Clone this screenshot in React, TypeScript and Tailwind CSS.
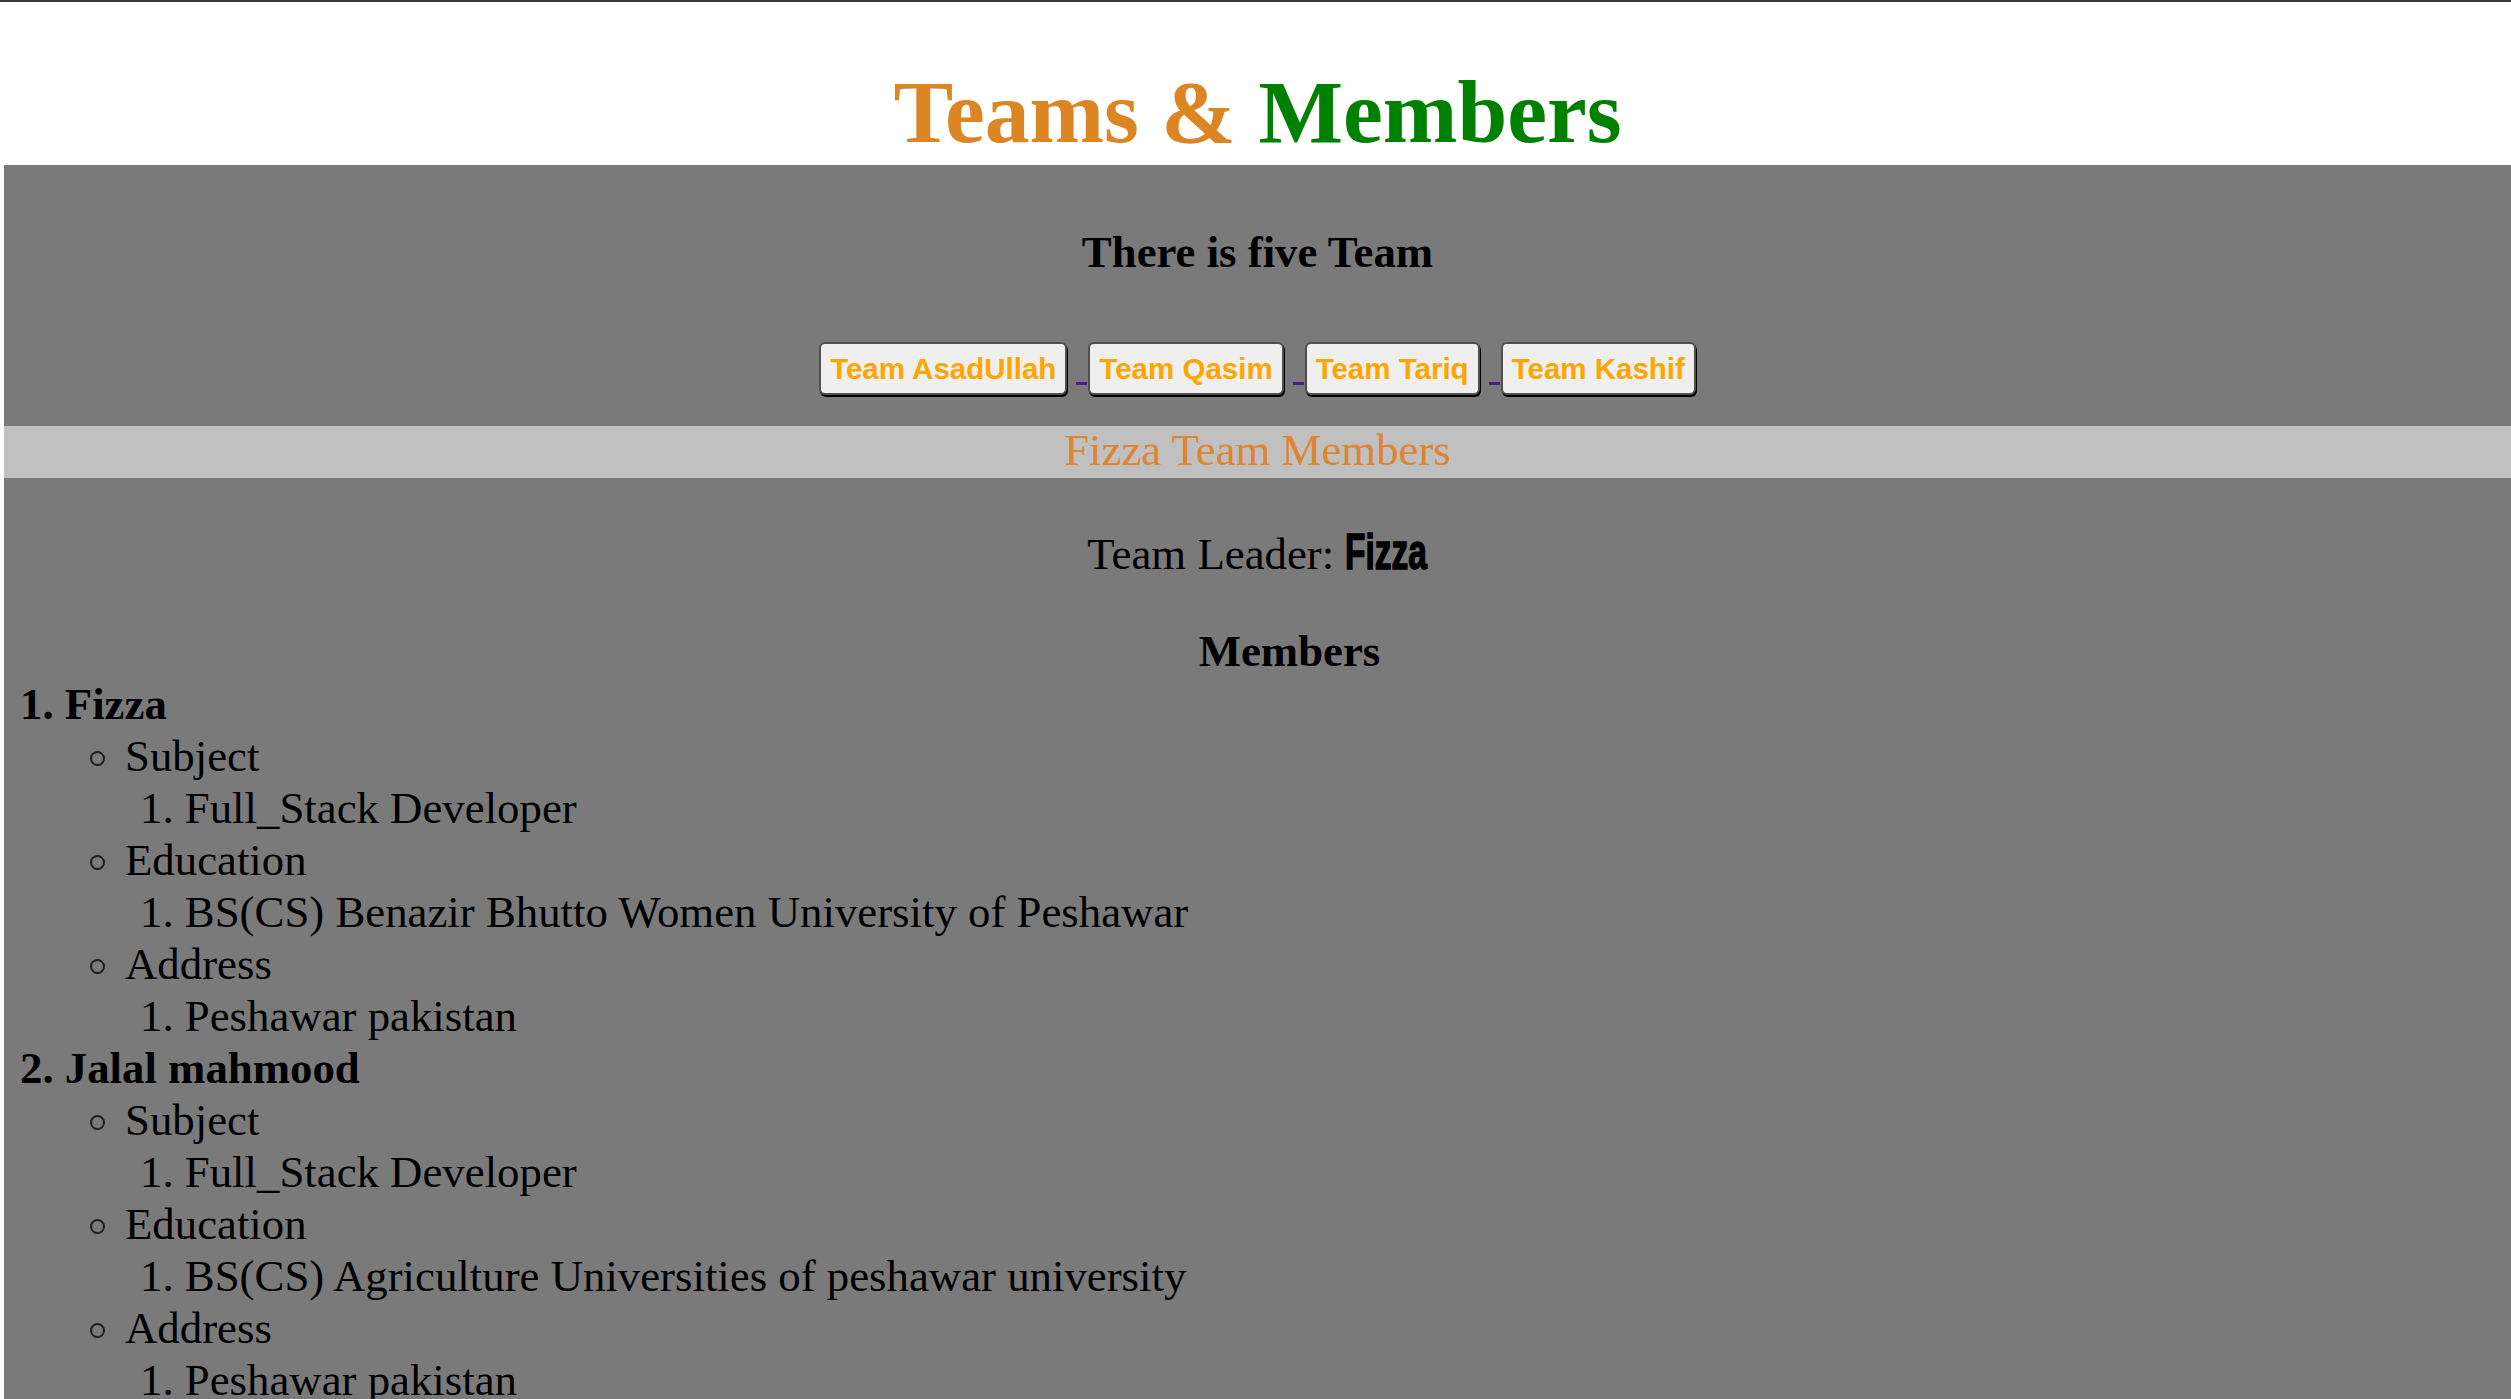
import React from "react";

type Member = {
  name: string;
  subject: string;
  education: string;
  address: string;
};

const members: Member[] = [
  {
    name: "Fizza",
    subject: "Full_Stack Developer",
    education: "BS(CS) Benazir Bhutto Women University of Peshawar",
    address: "Peshawar pakistan",
  },
  {
    name: "Jalal mahmood",
    subject: "Full_Stack Developer",
    education: "BS(CS) Agriculture Universities of peshawar university",
    address: "Peshawar pakistan",
  },
];

const teams = ["Team AsadUllah", "Team Qasim", "Team Tariq", "Team Kashif"];

function Detail({ label, value }: { label: string; value: string }) {
  return (
    <li>
      <div className="flex items-start pl-[86px]">
        <span className="mt-[21px] mr-[20px] h-[15px] w-[15px] shrink-0 rounded-full border-2 border-[#1e1e1e]" />
        <span>{label}</span>
      </div>
      <div className="pl-[136px]">1. {value}</div>
    </li>
  );
}

export default function App() {
  return (
    <div className="flex min-h-screen flex-col bg-white pl-[4px] font-['Liberation_Serif',serif] text-[44.8px] leading-[51.5px] text-black">
      {/* header */}
      <header className="-ml-[4px] border-t-2 border-[#3c3c3c] bg-white pt-[58px] pb-[2px]">
        <h1 className="pl-[4px] text-center text-[89.6px] leading-[103px] font-bold">
          <span className="text-[#db8523]">Teams &amp;</span>{" "}
          <span className="text-[#008000]">Members</span>
        </h1>
      </header>

      <main className="flex flex-1 flex-col bg-[#7a7a7a]">
        <section className="pt-[62px] pb-[31px]">
          <h4 className="text-center font-bold">There is five Team</h4>
          <div className="mt-[63.5px] flex items-start justify-center">
            {teams.map((t, i) => (
              <div key={t} className="flex items-start">
                {i > 0 && (
                  <span className="mt-[40px] mr-[1px] ml-[9px] h-[3px] w-[11px] bg-[#4b1c87]" />
                )}
                <button className="flex h-[53px] items-center rounded-[6px] border-2 border-[#4f4f4f] bg-[#efefef] px-[9px] font-['Liberation_Sans',Arial,sans-serif] text-[29.5px] leading-none font-bold text-[#ffa500] shadow-[1px_2px_0_0_#000]">
                  {t}
                </button>
              </div>
            ))}
          </div>
        </section>

        <div className="h-[52px] bg-[#c0c0c0] text-center leading-[49px] text-[#dd8530]">
          Fizza Team Members
        </div>

        <section className="pt-[48.5px]">
          <p className="text-center">
            Team Leader:{" "}
            <span className="mr-[-40px] inline-block origin-left scale-x-[0.67] font-['Liberation_Sans',Arial,sans-serif] text-[50px] leading-none font-bold [-webkit-text-stroke:1.5px_#000]">
              Fizza
            </span>
          </p>
          <h4 className="mt-[45.5px] pl-[64px] text-center font-bold">Members</h4>
          <ol className="mt-[1px] leading-[52px]">
            {members.map((m, i) => (
              <li key={m.name}>
                <div className="pl-[16px] font-bold">
                  {i + 1}. {m.name}
                </div>
                <ul>
                  <Detail label="Subject" value={m.subject} />
                  <Detail label="Education" value={m.education} />
                  <Detail label="Address" value={m.address} />
                </ul>
              </li>
            ))}
          </ol>
        </section>
      </main>
    </div>
  );
}
